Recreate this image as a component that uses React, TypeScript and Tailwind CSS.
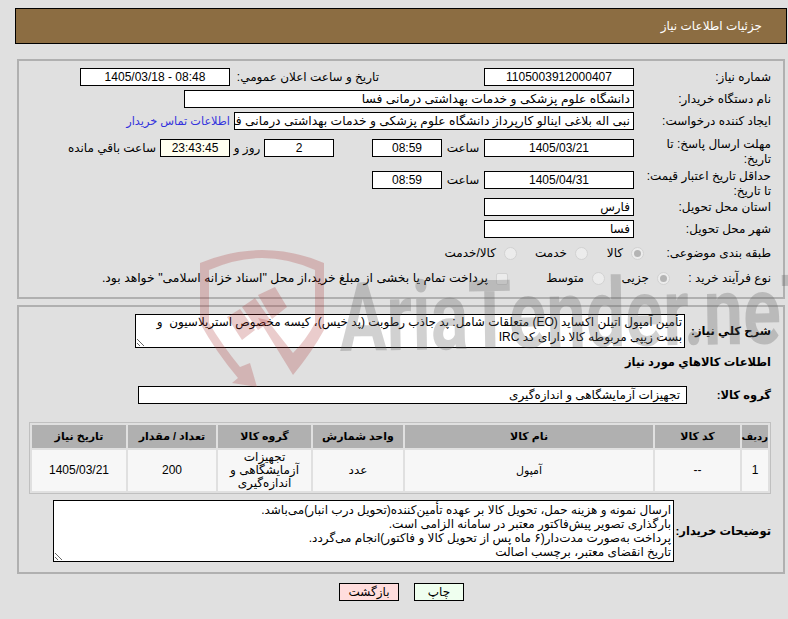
const box = "flex h-[18px] shrink-0 items-center overflow-hidden whitespace-nowrap border border-black bg-white px-[3px]";

function Label({ children, className = "" }: { children: React.ReactNode; className?: string }) {
  return <div className={`shrink-0 ${className}`}>{children}</div>;
}

function Field({ children, className = "", dir }: { children: React.ReactNode; className?: string; dir?: string }) {
  return <div dir={dir} className={`${box} ${className}`}>{children}</div>;
}

function Radio({ checked = false }: { checked?: boolean }) {
  return (
    <span className="flex h-[13px] w-[13px] shrink-0 items-center justify-center rounded-full border border-[#d2d2d2] bg-[#ececec]">
      {checked && <span className="h-[7px] w-[7px] rounded-full bg-[#b4b4b4]" />}
    </span>
  );
}

function Choice({ text, checked, className = "" }: { text: string; checked?: boolean; className?: string }) {
  return (
    <div className={`flex shrink-0 items-center gap-[8px] ${className}`}>
      <Radio checked={checked} />
      <span className="whitespace-nowrap">{text}</span>
    </div>
  );
}

function Watermark() {
  return (
    <svg className="pointer-events-none absolute left-0 top-0" width="788" height="619" viewBox="0 0 788 619">
      <text
        x="340"
        y="351"
        direction="ltr"
        textLength="485"
        lengthAdjust="spacingAndGlyphs"
        fontFamily="Roboto, sans-serif"
        fontWeight="700"
        fontSize="96"
        fill="#5a5a5a"
        fillOpacity="0.28"
        transform="rotate(-1 340 351)"
      >
        AriaTender.neT
      </text>
      <path
        fill="#a82828"
        fillOpacity="0.24"
        d="M200 263 Q232 250 262 250 Q294 250 324 263 L324 330 Q312 352 293 375 L258 318 L267 320 L293 353 Q306 340 315 323 L315 270 Q288 258 262 258 Q236 258 209 270 L209 323 Q222 345 240 367 L250 363 L257 387 L232 383 L238 378 Q216 352 200 323 Z"
      />
      <path fill="#a82828" fillOpacity="0.24" d="M227 317 L240 309 L255 330 L242 340 Z" />
      <path fill="#a82828" fillOpacity="0.24" d="M242 307 L255 298 L271 321 L258 330 Z" />
      <path fill="#a82828" fillOpacity="0.24" d="M258 295 L275 287 L287 307 L272 319 Z" />
    </svg>
  );
}

const rows = [
  { code: "--", name: "آمپول", unit: "عدد", group: "تجهیزات آزمایشگاهی و اندازه‌گیری", qty: "200", date: "1405/03/21" },
];

export default function App() {
  return (
    <div
      dir="rtl"
      className="relative h-[619px] w-[788px] overflow-hidden bg-[#e0e0e0] text-[12px] leading-[15px] text-black"
      style={{ fontFamily: '"Liberation Sans", "DejaVu Sans", sans-serif' }}
    >
      <div className="mr-[1px] mt-[8px] flex h-[36px] w-[772px] items-center border border-black bg-[#8c6d42] pr-[24px] text-white">
        جزئیات اطلاعات نیاز
      </div>

      <div className="mr-[3px] mt-[15px] h-[240px] w-[768px] border-2 border-[#b0b0b0] pr-[12px] pt-[7px]">
        <div className="flex items-center">
          <Label className="w-[137px]">شماره نياز:</Label>
          <Field className="w-[150px] justify-center">1105003912000407</Field>
          <Label className="w-[254px] pr-[105px]">تاريخ و ساعت اعلان عمومي:</Label>
          <Field dir="ltr" className="w-[150px] justify-center">1405/03/18 - 08:48</Field>
        </div>
        <div className="mt-[4px] flex items-center">
          <Label className="w-[137px]">نام دستگاه خریدار:</Label>
          <Field className="w-[450px] text-[12.3px]">دانشگاه علوم پزشکی و خدمات بهداشتی درمانی فسا</Field>
        </div>
        <div className="mt-[4px] flex items-center">
          <Label className="w-[137px]">ایجاد کننده درخواست:</Label>
          <Field className="w-[400px] text-[12.3px]">نبی اله بلاغی اینالو کارپرداز دانشگاه علوم پزشکی و خدمات بهداشتی درمانی فسا</Field>
          <a className="mr-[4px] whitespace-nowrap text-[11.3px] text-[#3333dd]">اطلاعات تماس خریدار</a>
        </div>
        <div className="mt-[7px] flex h-[32px] items-start">
          <Label className="w-[137px]">مهلت ارسال پاسخ: تا<br />تاریخ:</Label>
          <div className="flex items-center pt-[2px]">
            <Field className="w-[150px] justify-center">1405/03/21</Field>
            <span className="w-[42px] shrink-0 text-center">ساعت</span>
            <Field className="w-[70px] justify-center">08:59</Field>
            <span className="w-[38px] shrink-0" />
            <Field className="w-[70px] justify-center">2</Field>
            <span className="w-[34px] shrink-0 text-center">روز و</span>
            <Field className="w-[70px] justify-center !bg-[#fffff0]">23:43:45</Field>
            <span className="mr-[4px] whitespace-nowrap">ساعت باقي مانده</span>
          </div>
        </div>
        <div className="flex h-[32px] items-start">
          <Label className="w-[137px]">حداقل تاریخ اعتبار قیمت:<br />تا تاریخ:</Label>
          <div className="flex items-center pt-[2px]">
            <Field className="w-[150px] justify-center">1405/04/31</Field>
            <span className="w-[42px] shrink-0 text-center">ساعت</span>
            <Field className="w-[70px] justify-center">08:59</Field>
          </div>
        </div>
        <div className="mt-[-3px] flex items-center">
          <Label className="w-[137px]">استان محل تحویل:</Label>
          <Field className="w-[150px]">فارس</Field>
        </div>
        <div className="mt-[4px] flex items-center">
          <Label className="w-[137px]">شهر محل تحویل:</Label>
          <Field className="w-[150px]">فسا</Field>
        </div>
        <div className="mt-[8px] flex items-center">
          <Label className="w-[127px]">طبقه بندی موضوعی:</Label>
          <Choice text="کالا" checked className="w-[56px]" />
          <Choice text="خدمت" className="w-[71px]" />
          <Choice text="کالا/خدمت" />
        </div>
        <div className="mt-[10px] flex items-center">
          <Label className="w-[101px]">نوع فرآیند خرید :</Label>
          <Choice text="جزیی" checked className="w-[65px]" />
          <Choice text="متوسط" className="w-[97px]" />
          <div className="flex shrink-0 items-center gap-[8px]">
            <span className="h-[12px] w-[12px] shrink-0 rounded-[2px] border border-[#d2d2d2] bg-[#ececec]" />
            <span className="whitespace-nowrap text-[12.4px]">پرداخت تمام یا بخشی از مبلغ خرید،از محل "اسناد خزانه اسلامی" خواهد بود.</span>
          </div>
        </div>
      </div>

      <div className="mr-[3px] mt-[6px] h-[269px] w-[768px] border-2 border-[#b0b0b0] pr-[12px] pt-[7px]">
        <div className="flex items-center">
          <Label className="w-[86px] whitespace-nowrap text-[11.5px] font-bold">شرح كلي نياز:</Label>
          <textarea
            readOnly
            className="h-[34px] w-[550px] shrink-0 overflow-hidden border border-black bg-white px-[2px] text-[12px] leading-[15px] outline-none"
            value={"تأمین آمپول اتیلن اکساید (EO) متعلقات شامل: پد جاذب رطوبت (پد خیس)، کیسه مخصوص استریلاسیون  و بست زیپی مربوطه کالا دارای کد IRC"}
          />
        </div>
        <div className="mt-[7px] text-[11.5px] font-bold">اطلاعات كالاهاي مورد نياز</div>
        <div className="mt-[16px] flex items-center">
          <Label className="w-[84px] whitespace-nowrap text-[11.5px] font-bold">گروه کالا:</Label>
          <Field className="w-[549px] pr-[6px]">تجهیزات آزمایشگاهی و اندازه‌گیری</Field>
        </div>
        <table className="mt-[18px] w-[740px] table-fixed border-separate border-spacing-[2px] border border-[#c0c0c0] text-center">
          <colgroup>
            <col className="w-[26px]" />
            <col className="w-[85px]" />
            <col className="w-[248px]" />
            <col className="w-[90px]" />
            <col className="w-[93px]" />
            <col className="w-[88px]" />
            <col className="w-[94px]" />
          </colgroup>
          <thead>
            <tr className="h-[23px] bg-[#b0b0b0] text-[11px] font-bold">
              <th className="text-[10px]">ردیف</th>
              <th>کد کالا</th>
              <th>نام کالا</th>
              <th>واحد شمارش</th>
              <th>گروه کالا</th>
              <th>تعداد / مقدار</th>
              <th>تاریخ نیاز</th>
            </tr>
          </thead>
          <tbody>
            {rows.map((r, i) => (
              <tr key={i} className="h-[41px] bg-[#f7f7f7]">
                <td>{i + 1}</td>
                <td>{r.code}</td>
                <td className="text-[11px]">{r.name}</td>
                <td>{r.unit}</td>
                <td className="px-[8px] leading-[13px]">{r.group}</td>
                <td>{r.qty}</td>
                <td>{r.date}</td>
              </tr>
            ))}
          </tbody>
        </table>
        <div className="mt-[6px] flex items-center">
          <Label className="w-[97px] whitespace-nowrap text-[11.5px] font-bold">توضیحات خریدار:</Label>
          <textarea
            readOnly
            className="h-[62px] w-[621px] shrink-0 overflow-hidden border border-black bg-white px-[2px] pt-[2px] text-[12px] leading-[14px] outline-none"
            value={
              "ارسال نمونه و هزینه حمل، تحویل کالا بر عهده تأمین‌کننده(تحویل درب انبار)می‌باشد.\nبارگذاری تصویر پیش‌فاکتور معتبر در سامانه الزامی است.\nپرداخت به‌صورت مدت‌دار(۶ ماه پس از تحویل کالا و فاکتور)انجام می‌گردد.\nتاریخ انقضای معتبر، برچسب اصالت"
            }
          />
        </div>
      </div>

      <div className="mt-[9px] flex justify-center gap-[15px] pl-[15px]">
        <button className="h-[18px] w-[50px] border border-black bg-[#efffef] text-[12px]">چاپ</button>
        <button className="h-[18px] w-[60px] border border-black bg-[#ffdddd] text-[12px]">بازگشت</button>
      </div>

      <Watermark />
    </div>
  );
}
